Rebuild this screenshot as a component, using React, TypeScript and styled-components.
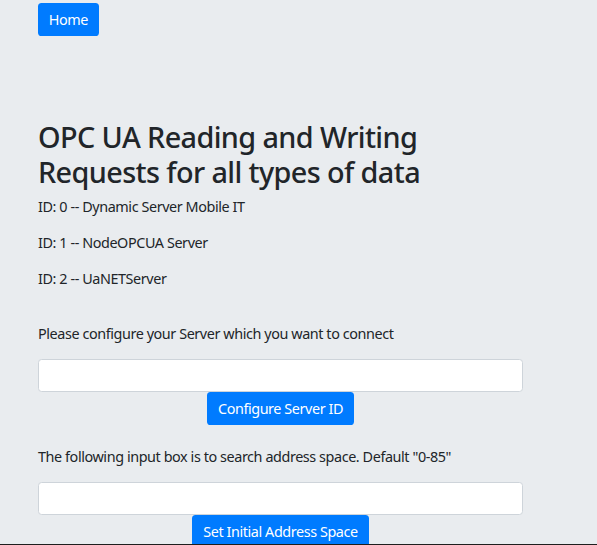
import styled, { createGlobalStyle } from "styled-components";

const GlobalStyle = createGlobalStyle`
  body {
    margin: 0;
    background: #e9ecef;
    color: #212529;
    font-family: "Noto Sans", "Open Sans", sans-serif;
    font-size: 14.4px;
    line-height: 1.5;
    letter-spacing: -0.42px;
  }
`;

const App = () => {
  return (
    <Screen>
      <GlobalStyle />
      <Nav>
        <Button>Home</Button>
      </Nav>
      <Main>
        <Title>
          OPC UA Reading and Writing
          <br />
          Requests for all types of data
        </Title>
        <Text>ID: 0 -- Dynamic Server Mobile IT</Text>
        <Text>ID: 1 -- NodeOPCUA Server</Text>
        <Text>ID: 2 -- UaNETServer</Text>
        <Spacer $size={19} />
        <Text>Please configure your Server which you want to connect</Text>
        <Input type="text" />
        <Actions>
          <Button>Configure Server ID</Button>
        </Actions>
        <Spacer $size={21} />
        <Text>
          The following input box is to search address space. Default "0-85"
        </Text>
        <Input type="text" />
        <Actions>
          <Button>Set Initial Address Space</Button>
        </Actions>
      </Main>
    </Screen>
  );
};

export default App;

const Screen = styled.div`
  height: 100vh;
  box-sizing: border-box;
  overflow: hidden;
  border-bottom: 1px solid #1e1e1e;
`;

const Nav = styled.div`
  padding: 3px 38px 0;
`;

const Main = styled.div`
  width: 485px;
  padding: 0 38px;
  margin-top: 84px;
`;

const Title = styled.h2`
  margin: 0 0 6.5px;
  font-size: 28.8px;
  font-weight: 500;
  line-height: 1.2;
  letter-spacing: -0.6px;
  white-space: nowrap;
`;

const Text = styled.p`
  margin: 0 0 14.4px;
  white-space: nowrap;
`;

const Spacer = styled.div<{ $size: number }>`
  height: ${(p) => p.$size}px;
`;

const Input = styled.input`
  display: block;
  width: 100%;
  height: 33px;
  box-sizing: border-box;
  padding: 0 10.8px;
  border: 1px solid #ced4da;
  border-radius: 3.6px;
  background: #fff;
  font: inherit;
`;

const Actions = styled.div`
  display: flex;
  justify-content: center;
`;

const Button = styled.button`
  height: 33px;
  padding: 0 10.8px;
  border: none;
  border-radius: 3.6px;
  background: #007bff;
  color: #fff;
  font-family: inherit;
  font-size: 14.4px;
  letter-spacing: -0.42px;
  cursor: pointer;
`;
